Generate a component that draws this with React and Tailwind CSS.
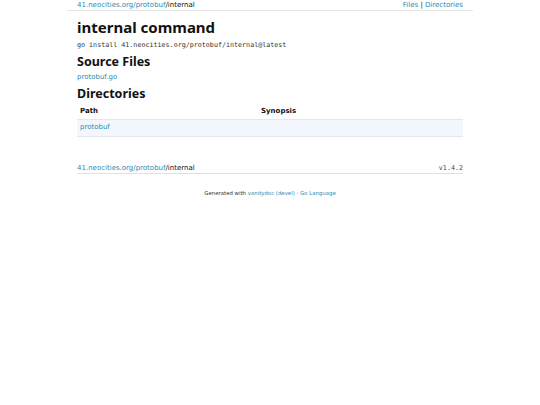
import React from 'react';

// Go package doc page (vanitydoc style), small scale

const link = 'text-[#2b8bb3]';
const heading = "font-['Noto_Sans',sans-serif] font-bold";

export default function App() {
  return (
    <div className="min-h-screen bg-white font-['DejaVu_Sans',sans-serif] text-[#111]">
      <div className="mx-auto w-[406px]">
        <div className="flex items-center justify-between border-b border-[#e4e4e4] px-[10px] h-[11px] text-[7px] leading-none">
          <div>
            <a className={link}>41.neocities.org/protobuf</a>/internal
          </div>
          <div>
            <a className={link}>Files</a> | <a className={link}>Directories</a>
          </div>
        </div>

        <div className="px-[10px]">
          <h1 className={`mt-[7px] text-[15px] leading-[18px] ${heading}`}>internal command</h1>
          <div className="mt-[5px] font-['DejaVu_Sans_Mono',monospace] text-[6.7px] leading-[8px] text-[#333]">
            go install 41.neocities.org/protobuf/internal@latest
          </div>

          <h2 className={`mt-[6px] text-[12.5px] leading-[14px] ${heading}`}>Source Files</h2>
          <div className="mt-[4px] text-[7px] leading-[9px]">
            <a className={link}>protobuf.go</a>
          </div>

          <h2 className={`mt-[5px] text-[12.5px] leading-[14px] ${heading}`}>Directories</h2>
          <table className="mt-[3px] w-full text-[7px] border-collapse">
            <thead>
              <tr className="border-b border-[#e2e8ef]">
                <th className="w-[180px] px-[3px] h-[15px] text-left font-bold">Path</th>
                <th className="px-[4px] text-left font-bold">Synopsis</th>
              </tr>
            </thead>
            <tbody>
              <tr className="bg-[#f3f7fd] border-b border-[#e2e8ef]">
                <td className="px-[3px] h-[17px]">
                  <a className={link}>protobuf</a>
                </td>
                <td></td>
              </tr>
            </tbody>
          </table>

          <div className="mt-[28px] flex items-center justify-between border-b border-[#e0e0e0] text-[7px] leading-[7px] pb-[1px]">
            <div>
              <a className={link}>41.neocities.org/protobuf</a>/internal
            </div>
            <div className="font-['DejaVu_Sans_Mono',monospace] text-[6.7px] text-[#444]">v1.4.2</div>
          </div>
        </div>

        <div className="mt-[15px] text-center text-[5.4px] leading-[8px] text-[#333]">
          Generated with <a className={link}>vanitydoc (devel)</a> · <a className={link}>Go Language</a>
        </div>
      </div>
    </div>
  );
}
